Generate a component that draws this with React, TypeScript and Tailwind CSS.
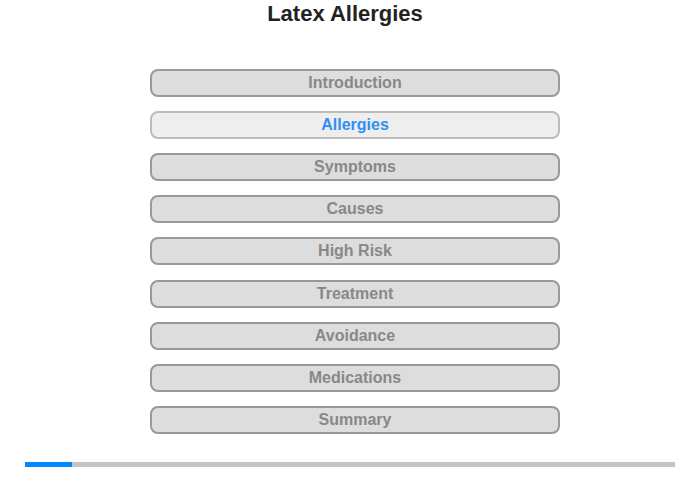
const topics = [
  'Introduction',
  'Allergies',
  'Symptoms',
  'Causes',
  'High Risk',
  'Treatment',
  'Avoidance',
  'Medications',
  'Summary',
];

const current = 'Allergies';

export default function App() {
  return (
    <div className="w-[700px] h-[480px] bg-white font-['Liberation_Sans',Arial,sans-serif]">
      <h1 className="w-[690px] text-center text-[22px] leading-[28px] font-bold text-[#222]">
        Latex Allergies
      </h1>

      <div className="mt-[41px] ml-[150px] w-[410px] flex flex-col gap-[14px]">
        {topics.map((t, i) => {
          const active = t === current;
          return (
            <button
              key={t}
              className={
                active
                  ? 'h-[28px] w-full rounded-[8px] border-2 border-[#bbbbbb] bg-[#eeeeee] text-[16px] font-bold text-[#2e90f5] leading-none'
                  : 'h-[28px] w-full rounded-[8px] border-2 border-[#999999] bg-[#dddddd] text-[16px] font-bold text-[#888888] leading-none'
              }
              style={i === 5 ? { marginTop: 1 } : undefined}
            >
              {t}
            </button>
          );
        })}
      </div>

      {/* progress */}
      <div className="mt-[28px] mx-[25px] h-[5px] bg-[#c4c4c4] flex">
        <div className="w-[47px] h-full bg-[#0088ff]" />
      </div>
    </div>
  );
}
